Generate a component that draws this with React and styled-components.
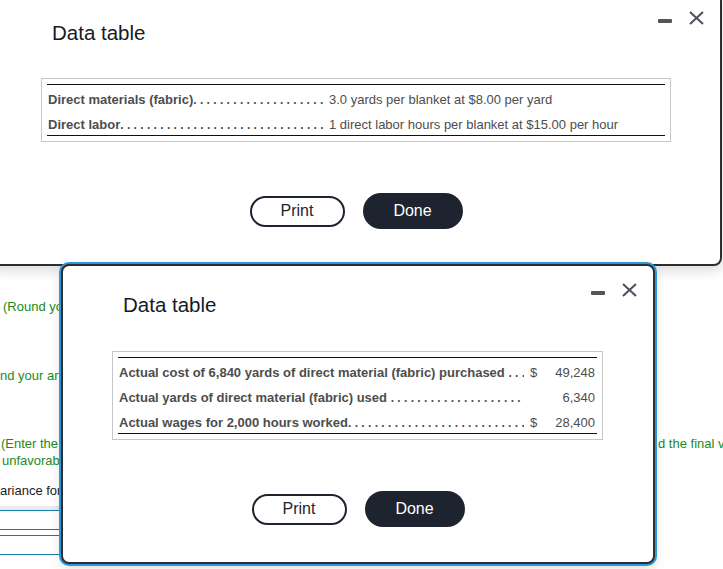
import React from 'react'
import styled, { createGlobalStyle, css } from 'styled-components'

const GlobalStyle = createGlobalStyle`
  html, body { margin: 0; padding: 0; background: #fff; }
  body { font-family: "Liberation Sans", Arial, sans-serif; overflow: hidden; }
`

const Page = styled.div`
  position: relative;
  width: 723px;
  height: 569px;
  overflow: hidden;
  padding-top: 298px;
  box-sizing: border-box;
`

const Line = styled.div`
  display: grid;
  grid-template-columns: 59px 599px 1fr;
  margin-top: ${p => p.$gap || 0}px;
  font-size: 13px;
  line-height: 17px;
  white-space: nowrap;
  color: ${p => (p.$dark ? '#1c1c1c' : '#1b8a1b')};
  span { overflow: hidden; }
  span:first-child { padding-left: ${p => p.$indent || 0}px; }
  span:nth-child(2) { grid-column: 3; }
`

const Inputs = styled.div`
  width: 220px;
  margin-top: 7px;
`

const Shade = styled.div`
  height: 4px;
  background: #ebebeb;
`

const InputCell = styled.div`
  height: 18px;
  border-top: 1px solid #137ea3;
  border-bottom: 1px solid #137ea3;
  margin-bottom: 5px;
`

const Dialog = styled.section`
  position: absolute;
  left: ${p => p.$x}px;
  top: ${p => p.$y}px;
  width: ${p => p.$w}px;
  box-sizing: border-box;
  display: flex;
  flex-direction: column;
  padding: 17px 0 35px;
  background: #fff;
  border: 2px solid #2e2e2e;
  border-radius: 8px;
  z-index: ${p => (p.$focused ? 2 : 1)};
  box-shadow: ${p =>
    p.$focused
      ? '0 0 0 2px #2b98d9, 0 4px 12px rgba(0,0,0,0.15)'
      : '0 4px 14px rgba(0,0,0,0.16)'};
`

const Header = styled.div`
  display: flex;
  justify-content: space-between;
  align-items: flex-start;
  padding: 0 16px 0 60px;
`

const Title = styled.h2`
  margin: 10px 0 0;
  font-size: 20.5px;
  line-height: 24px;
  font-weight: normal;
  color: #151a24;
`

const Controls = styled.div`
  display: flex;
  align-items: center;
  gap: 17px;
  height: 14px;
`

const Minimize = styled.div`
  width: 14px;
  height: 4px;
  margin-top: 5px;
  border-radius: 1px;
  background: #555;
`

const CloseButton = styled.div`
  display: flex;
  width: 15px;
  height: 14px;
  svg { display: block; }
`

const TableBox = styled.div`
  align-self: flex-start;
  width: ${p => p.$w}px;
  margin: ${p => p.$top}px 0 0 49px;
  padding: 5px;
  box-sizing: border-box;
  border: 1px solid #c6c6c6;
`

const Rules = styled.div`
  border-top: 1px solid #111;
  border-bottom: 1px solid #111;
`

const Row = styled.div`
  display: flex;
  height: 25px;
  padding-top: 8px;
  box-sizing: border-box;
  font-size: 13px;
  line-height: 14px;
  color: #4d4d4d;
  white-space: nowrap;
`

const Label = styled.div`
  display: flex;
  width: ${p => p.$w}px;
  padding: 0 3px 0 1px;
  box-sizing: border-box;
  overflow: hidden;
  font-weight: bold;
  white-space: pre;
`

const Leader = styled.span`
  flex: 1;
  overflow: hidden;
  font-size: 12px;
  &::after {
    content: '. . . . . . . . . . . . . . . . . . . . . . . . . . . . . . . . . . . . . . . . . . . . . . . . . . . . . . . . . . . . . . . . . . . .';
  }
`

const Text = styled.div`
  padding-left: 1px;
`

const Dollar = styled.div`
  width: 12px;
  padding-left: 3px;
  box-sizing: border-box;
`

const Amount = styled.div`
  flex: 1;
  padding-right: 2px;
  text-align: right;
`

const Buttons = styled.div`
  display: flex;
  justify-content: center;
  align-items: center;
  gap: 18px;
  margin-top: 51px;
`

const Button = styled.button`
  font-family: "Liberation Sans", Arial, sans-serif;
  font-size: 16px;
  padding: 0;
  cursor: pointer;
  border-radius: 18px;
  ${p =>
    p.$primary
      ? css`
          width: 100px;
          height: 36px;
          border: none;
          background: #1e2330;
          color: #fff;
        `
      : css`
          width: 95px;
          height: 31px;
          border: 2px solid #1e2330;
          background: #fff;
          color: #1e2330;
        `}
`

const WindowControls = () => (
  <Controls>
    <Minimize />
    <CloseButton>
      <svg width="15" height="14" viewBox="0 0 15 14">
        <path d="M1 1L14 13M14 1L1 13" stroke="#4a515c" strokeWidth="2" fill="none" />
      </svg>
    </CloseButton>
  </Controls>
)

const DataDialog = ({ x, y, w, focused, tableWidth, tableTop, children }) => (
  <Dialog $x={x} $y={y} $w={w} $focused={focused}>
    <Header>
      <Title>Data table</Title>
      <WindowControls />
    </Header>
    <TableBox $w={tableWidth} $top={tableTop}>
      <Rules>{children}</Rules>
    </TableBox>
    <Buttons>
      <Button>Print</Button>
      <Button $primary>Done</Button>
    </Buttons>
  </Dialog>
)

const standards = [
  ['Direct materials (fabric)', '3.0 yards per blanket at $8.00 per yard'],
  ['Direct labor', '1 direct labor hours per blanket at $15.00 per hour'],
]

const actuals = [
  ['Actual cost of 6,840 yards of direct material (fabric) purchased ', '$', '49,248'],
  ['Actual yards of direct material (fabric) used ', '', '6,340'],
  ['Actual wages for 2,000 hours worked', '$', '28,400'],
]

export default function App() {
  return (
    <>
      <GlobalStyle />
      <Page>
        <Line $indent={3}><span>(Round your answer to the nearest cent.)</span></Line>
        <Line $gap={52}><span>nd your answer to the nearest whole dollar.)</span></Line>
        <Line $gap={51} $indent={1}>
          <span>(Enter the variance amounts as positive numbers,</span>
          <span>d the final v</span>
        </Line>
        <Line $indent={2}><span>unfavorable (U).)</span></Line>
        <Line $gap={13} $dark><span>ariance for direct labor</span></Line>
        <Inputs>
          <Shade />
          <InputCell />
          <InputCell />
        </Inputs>

        <DataDialog x={-10} y={-8} w={732} tableWidth={630} tableTop={33}>
          {standards.map(([label, value]) => (
            <Row key={label}>
              <Label $w={281}>
                {label}
                <Leader />
              </Label>
              <Text>{value}</Text>
            </Row>
          ))}
        </DataDialog>

        <DataDialog x={61} y={264} w={594} focused tableWidth={491} tableTop={34}>
          {actuals.map(([label, sign, value]) => (
            <Row key={label}>
              <Label $w={409}>
                {label}
                <Leader />
              </Label>
              <Dollar>{sign}</Dollar>
              <Amount>{value}</Amount>
            </Row>
          ))}
        </DataDialog>
      </Page>
    </>
  )
}
